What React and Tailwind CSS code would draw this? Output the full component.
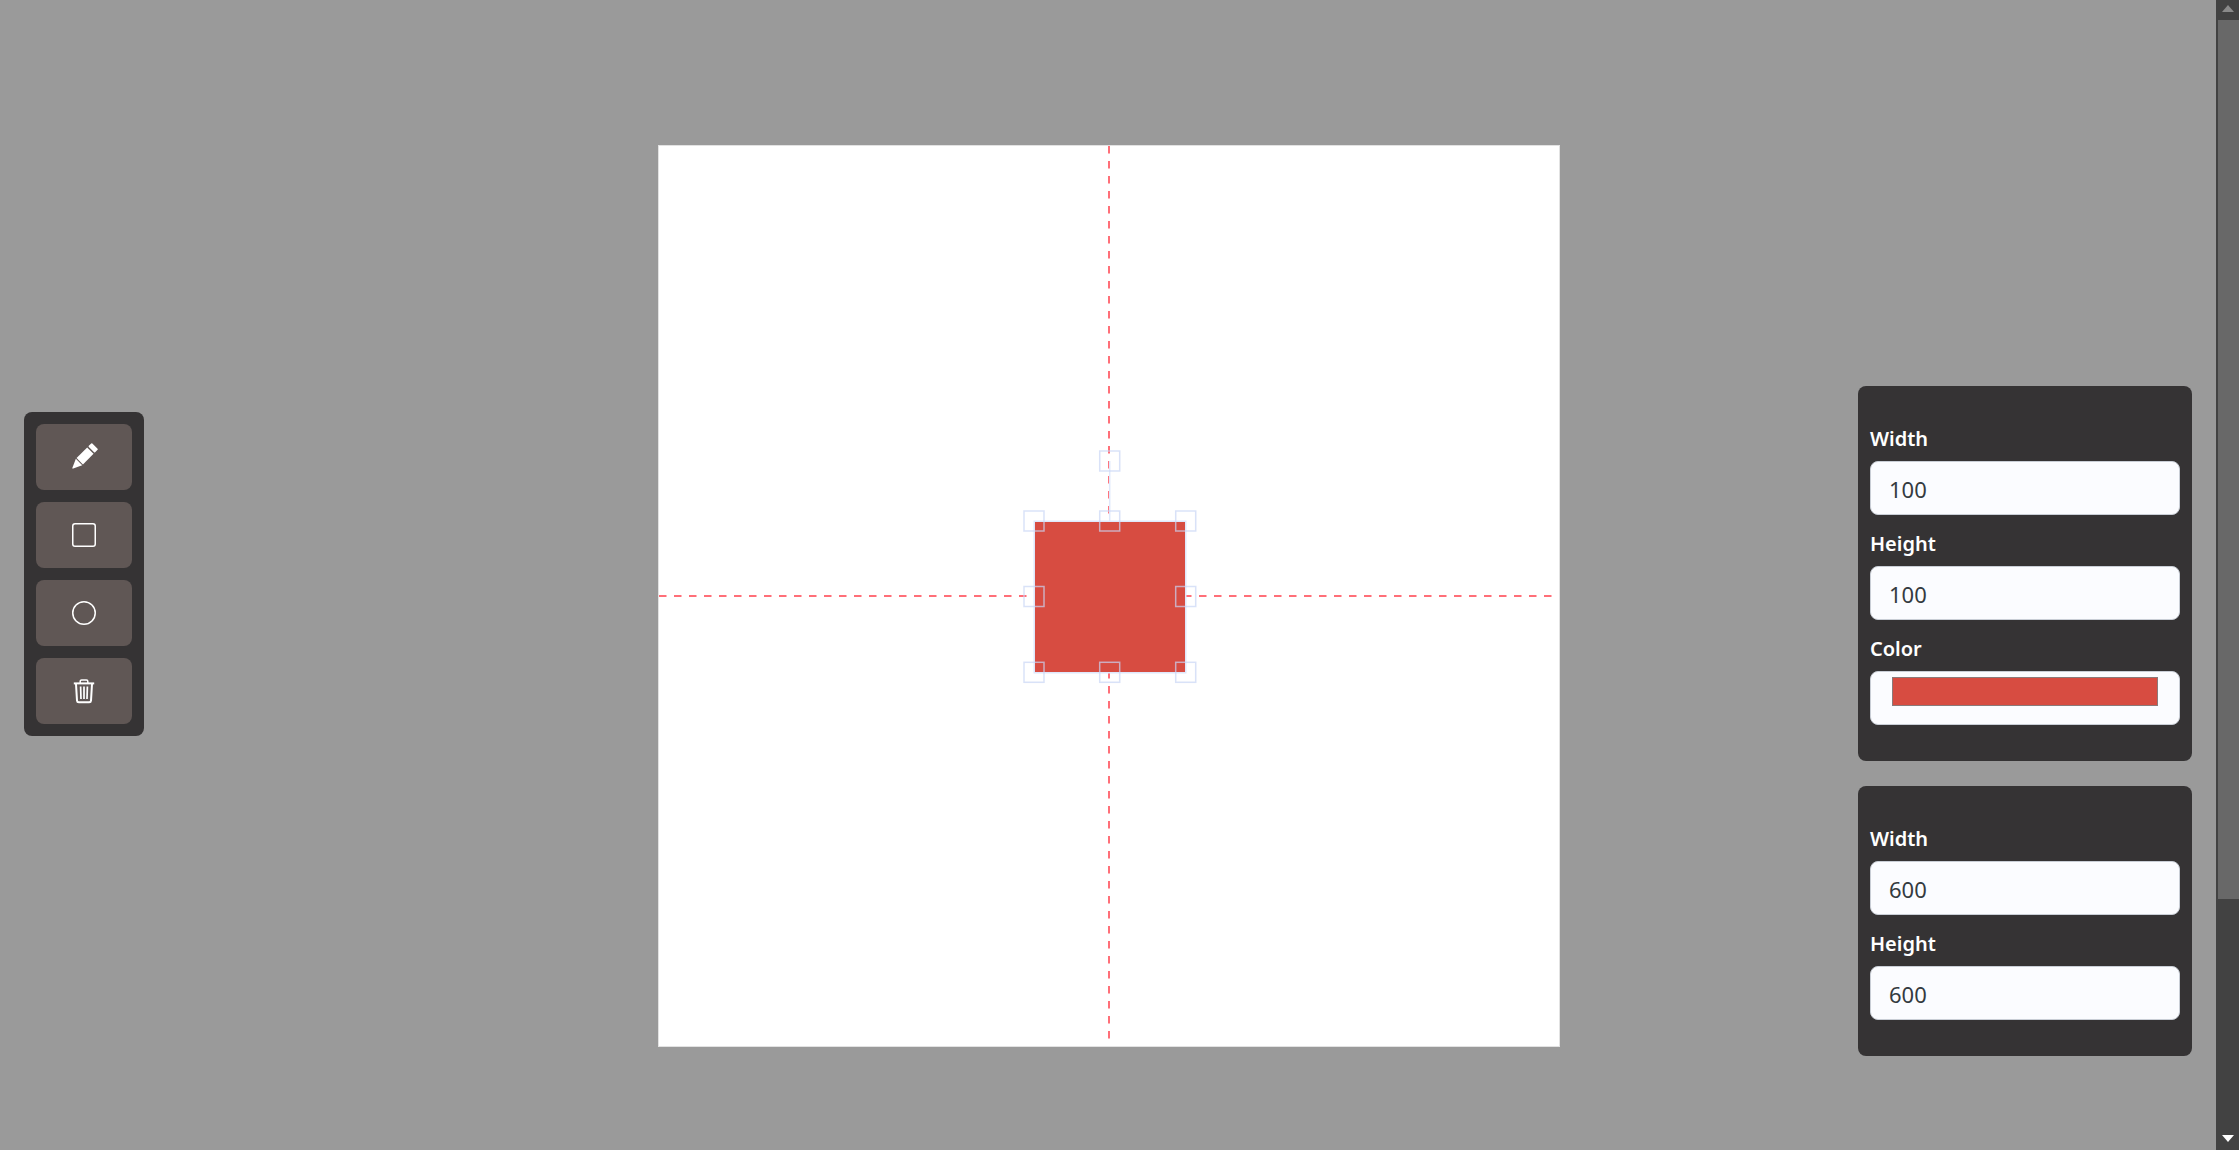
import React from "react";
import { BsSquare, BsCircle } from "react-icons/bs";

const font = { fontFamily: '"Noto Sans", sans-serif' };

function PencilIcon() {
  return (
    <svg width="24" height="24" viewBox="0 0 24 24" fill="#ffffff" className="overflow-visible">
      <g transform="rotate(45 12 12)">
        <rect x="7.5" y="-3.5" width="9" height="5" rx="0.8" />
        <rect x="7.5" y="3" width="9" height="15" />
        <path d="M7.5 19h9L12.6 27.8c-.3.6-.9.6-1.2 0z" />
      </g>
    </svg>
  );
}

function TrashIcon() {
  return (
    <svg width="24" height="24" viewBox="0 0 24 24" fill="none" stroke="#ffffff" className="overflow-visible">
      <path d="M1.8 4.4h20.4" strokeWidth="2" />
      <path d="M8.2 4V2.2C8.2 1.4 8.8.9 9.6.9h4.8c.8 0 1.4.5 1.4 1.3V4" strokeWidth="1.5" />
      <path d="M4 5l1 16.6c.1 1 .8 1.6 1.8 1.6h10.4c1 0 1.7-.6 1.8-1.6L20 5" strokeWidth="2" />
      <path d="M8.6 7.5l.4 12.5M12 7.5V20M15.4 7.5L15 20" strokeWidth="1.7" />
    </svg>
  );
}

function Tool({ children }) {
  return (
    <button className="w-[96px] h-[66px] rounded-lg bg-[#605755] text-white flex items-center justify-center">
      {children}
    </button>
  );
}

function Field({ label, value, color }) {
  return (
    <div className="flex flex-col">
      <label className="h-[39px] pt-[2px] text-[20px] leading-[30px] font-semibold text-white">{label}</label>
      <div className="h-[54px] w-[310px] rounded-lg bg-[#fbfcff] border border-[#c9ced6] pl-[18px] pt-[2px] flex items-center text-[22px] text-[#343a40]">
        {color ? <div className="self-start mt-[3px] ml-[3px] w-[266px] h-[29px] border border-[#8a7a7a] bg-[#d74c41]" /> : value}
      </div>
    </div>
  );
}

function Panel({ children }) {
  return (
    <div className="w-[334px] rounded-lg bg-[#353334] px-[12px] pt-[36px] pb-[36px] flex flex-col gap-[12px]">{children}</div>
  );
}

const handles = [
  [1109.7, 461],
  [1034, 521], [1109.7, 521], [1185.7, 521],
  [1034, 596.5], [1185.7, 596.5],
  [1034, 672.3], [1109.7, 672.3], [1185.7, 672.3],
];

function Stage() {
  return (
    <div className="w-[902px] h-[902px] bg-white border border-[#e2e2e2]">
      <svg width="900" height="900" viewBox="659 146 900 900" className="block">
        <line x1="659" y1="596" x2="1552" y2="596" stroke="#ff6f78" strokeWidth="2" strokeDasharray="7.5 7.5" />
        <line x1="1109" y1="146" x2="1109" y2="1040" stroke="#ff6f78" strokeWidth="2" strokeDasharray="7.5 7.5" />
        <line x1="1109.7" y1="461" x2="1109.7" y2="521" stroke="#dfe8fb" strokeWidth="1.5" />
        <rect x="1034.25" y="521.25" width="151.5" height="151.5" fill="#d74c41" stroke="#dfe8fb" strokeWidth="1.5" />
        {handles.map(([x, y]) => (
          <rect key={x + "-" + y} x={x - 10} y={y - 10} width="20" height="20" fill="none" stroke="#c9d6f5" strokeOpacity="0.7" strokeWidth="1.5" />
        ))}
      </svg>
    </div>
  );
}

export default function App() {
  return (
    <div style={font} className="h-[1150px] w-[2239px] flex overflow-hidden bg-[#9a9a9a]">
      <div className="flex-1 flex">
        <div className="w-[658px] shrink-0 pl-[24px] pt-[412px]">
          <div className="w-[120px] rounded-lg bg-[#353334] p-[12px] flex flex-col gap-[12px]">
            <Tool><PencilIcon /></Tool>
            <Tool><BsSquare size={24} /></Tool>
            <Tool><BsCircle size={24} /></Tool>
            <Tool><TrashIcon /></Tool>
          </div>
        </div>
        <div className="w-[1200px] shrink-0 pt-[145px]">
          <Stage />
        </div>
        <div className="w-[334px] shrink-0 pt-[386px] flex flex-col gap-[25px]">
          <Panel>
            <Field label="Width" value="100" />
            <Field label="Height" value="100" />
            <Field label="Color" color />
          </Panel>
          <Panel>
            <Field label="Width" value="600" />
            <Field label="Height" value="600" />
          </Panel>
        </div>
      </div>
      <div className="w-[23px] h-full bg-[#424242] flex flex-col items-center justify-between relative">
        <svg width="12" height="7" viewBox="0 0 12 7" className="mt-[5px]"><path d="M6 0l6 7H0z" fill="#8a8a8a" /></svg>
        <div className="absolute left-[2px] top-[20px] w-[21px] h-[879px] bg-[#686868]" />
        <svg width="12" height="7" viewBox="0 0 12 7" className="mb-[8px]"><path d="M6 7L0 0h12z" fill="#ffffff" /></svg>
      </div>
    </div>
  );
}
